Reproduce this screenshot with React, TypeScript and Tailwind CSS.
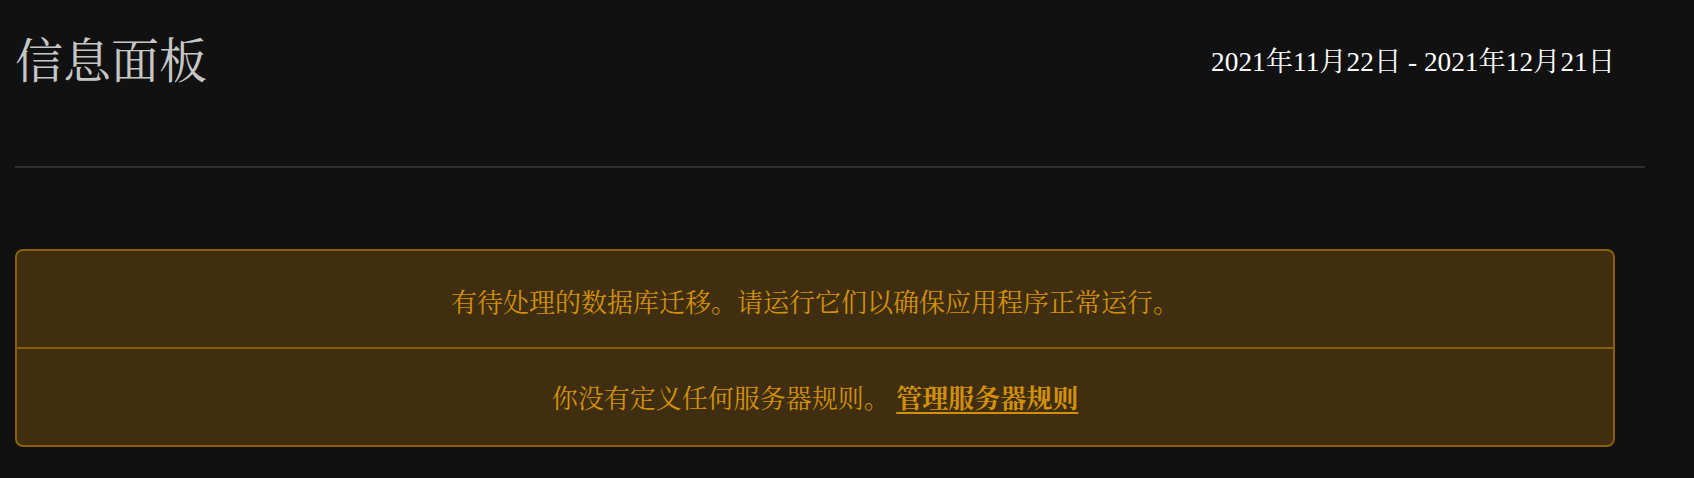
import React from "react";

export default function App() {
  const serif = { fontFamily: '"Liberation Serif", "Noto Serif CJK SC", "Noto Sans CJK SC", serif' };
  return (
    <div className="min-h-screen w-full bg-[#111111] pl-[15px]" style={serif}>
      <div className="flex w-[1600px] items-start justify-between pt-[34px]">
        <h1 className="text-[48px] leading-[56px] text-[#c6c6c6]">信息面板</h1>
        <div className="pt-[12px] text-[27.3px] leading-[32px] text-white">2021年11月22日 - 2021年12月21日</div>
      </div>
      <div className="mt-[76px] h-[2px] w-[1630px] bg-[#2f2f2f]" />
      <div className="mt-[81px] w-[1600px] overflow-hidden rounded-[8px] border-2 border-[#8a5e0a] bg-[#3f2f10] text-[26px] text-[#d2900a]">
        <div className="flex h-[98px] items-center justify-center border-b-2 border-[#8a5e0a] pt-[8px]">
          有待处理的数据库迁移。请运行它们以确保应用程序正常运行。
        </div>
        <div className="flex h-[96px] items-center justify-center pt-[5px]">
          <span className="whitespace-pre">你没有定义任何服务器规则。 </span>
          <a href="#" className="font-bold underline underline-offset-4">管理服务器规则</a>
        </div>
      </div>
    </div>
  );
}
